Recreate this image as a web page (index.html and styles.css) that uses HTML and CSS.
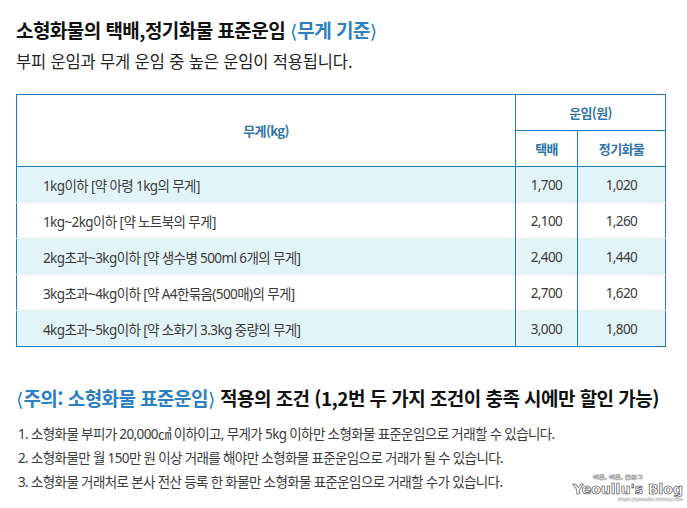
FILE: index.html
```html
<!DOCTYPE html>
<html lang="ko">
<head>
<meta charset="utf-8">
<link rel="stylesheet" href="styles.css">
</head>
<body>
<div class="page">
  <h2 class="title">소형화물의 택배,정기화물 표준운임 <span class="blue"><span class="br">⟨</span>무게 기준<span class="br">⟩</span></span></h2>
  <p class="sub">부피 운임과 무게 운임 중 높은 운임이 적용됩니다.</p>
  <table class="rates">
    <colgroup><col class="c1"><col class="c2"><col class="c3"></colgroup>
    <thead>
      <tr><th rowspan="2">무게(kg)</th><th colspan="2">운임(원)</th></tr>
      <tr><th>택배</th><th>정기화물</th></tr>
    </thead>
    <tbody>
      <tr class="alt"><td class="w">1kg이하 [약 아령 1kg의 무게]</td><td>1,700</td><td>1,020</td></tr>
      <tr><td class="w">1kg~2kg이하 [약 노트북의 무게]</td><td>2,100</td><td>1,260</td></tr>
      <tr class="alt"><td class="w">2kg초과~3kg이하 [약 생수병 500ml 6개의 무게]</td><td>2,400</td><td>1,440</td></tr>
      <tr><td class="w">3kg초과~4kg이하 [약 A4한묶음(500매)의 무게]</td><td>2,700</td><td>1,620</td></tr>
      <tr class="alt"><td class="w">4kg초과~5kg이하 [약 소화기 3.3kg 중량의 무게]</td><td>3,000</td><td>1,800</td></tr>
    </tbody>
  </table>
  <h2 class="title2"><span class="blue"><span class="br">⟨</span>주의: 소형화물 표준운임<span class="br">⟩</span></span> 적용의 조건 (1,2번 두 가지 조건이 충족 시에만 할인 가능)</h2>
  <ol class="notes">
    <li>1. 소형화물 부피가 20,000㎤ 이하이고, 무게가 5kg 이하만 소형화물 표준운임으로 거래할 수 있습니다.</li>
    <li>2. 소형화물만 월 150만 원 이상 거래를 해야만 소형화물 표준운임으로 거래가 될 수 있습니다.</li>
    <li>3. 소형화물 거래처로 본사 전산 등록 한 화물만 소형화물 표준운임으로 거래할 수가 있습니다.</li>
  </ol>
  <div class="wm">
    <div class="wm-top">여울, 여울, 블로그</div>
    <div class="wm-name">Yeoullu's Blog</div>
    <div class="wm-url">https://yeoullu.tistory.com</div>
  </div>
</div>
</body>
</html>
```
FILE: styles.css
```css
* { box-sizing: border-box; }
html, body { margin: 0; padding: 0; background: #fff; }
body {
  font-family: "Noto Sans CJK KR", "Noto Sans", sans-serif;
  color: #222;
  width: 687px;
  height: 508px;
  overflow: hidden;
}
.page { position: relative; padding: 0 22px 0 16px; height: 508px; }
.title {
  margin: 0;
  padding-top: 17px;
  font-size: 19px;
  font-weight: 700;
  letter-spacing: -0.55px;
  line-height: 26px;
  color: #111;
}
.blue { color: #2a80c2; }
.br { font-family: "DejaVu Sans", sans-serif; font-weight: 400; letter-spacing: 0; }
.sub {
  margin: 6px 0 0;
  font-size: 16.5px;
  line-height: 22px;
  letter-spacing: -0.15px;
  color: #222;
}
.rates {
  margin-top: 22px;
  width: 650px;
  border-collapse: collapse;
  border: 1px solid #1d7ab8;
  font-family: "Noto Sans", "Noto Sans CJK KR", sans-serif;
  font-size: 13.5px;
  letter-spacing: -0.6px;
}
.c1 { width: 499px; }
.c2 { width: 62px; }
.c3 { width: 88px; }
.rates th {
  height: 36px;
  color: #2e74a8;
  font-family: "Noto Sans CJK KR", sans-serif;
  font-weight: 700;
  font-size: 13px;
  border: 1px solid #1d7ab8;
  padding: 0;
}
.rates td {
  height: 36px;
  padding: 0;
  text-align: center;
  color: #3a3a3a;
  border-top: 1px solid #ececec;
  border-left: 1px solid #1d7ab8;
}
.rates tbody tr:first-child td { border-top: 1px solid #1d7ab8; }
.rates td.w { text-align: left; padding-left: 26px; border-left: none; }
.rates tr.alt td { background: #e3f4f8; }
.title2 {
  margin: 38px 0 0;
  font-size: 19px;
  font-weight: 700;
  letter-spacing: -0.55px;
  line-height: 26px;
  color: #111;
}
.notes {
  list-style: none;
  margin: 10px 0 0;
  padding: 0 0 0 2px;
  font-family: "Noto Sans", "Noto Sans CJK KR", sans-serif;
  font-size: 13.5px;
  letter-spacing: -0.62px;
  color: #3a3a3a;
}
.notes li { line-height: 24px; }
.wm {
  position: absolute;
  right: 4px;
  bottom: 6px;
  text-align: right;
  font-family: "DejaVu Sans", sans-serif;
}
.wm-top { font-size: 6px; color: #fff; text-shadow: 0 0 1px #000, 0 0 1px #000; margin-right: 40px; }
.wm-name {
  font-size: 14px;
  font-weight: 700;
  color: #fff;
  line-height: 14px;
  -webkit-text-stroke: 0.6px #333;
}
.wm-url { font-size: 5px; color: #fff; text-shadow: 0 0 1px #000; }
```
